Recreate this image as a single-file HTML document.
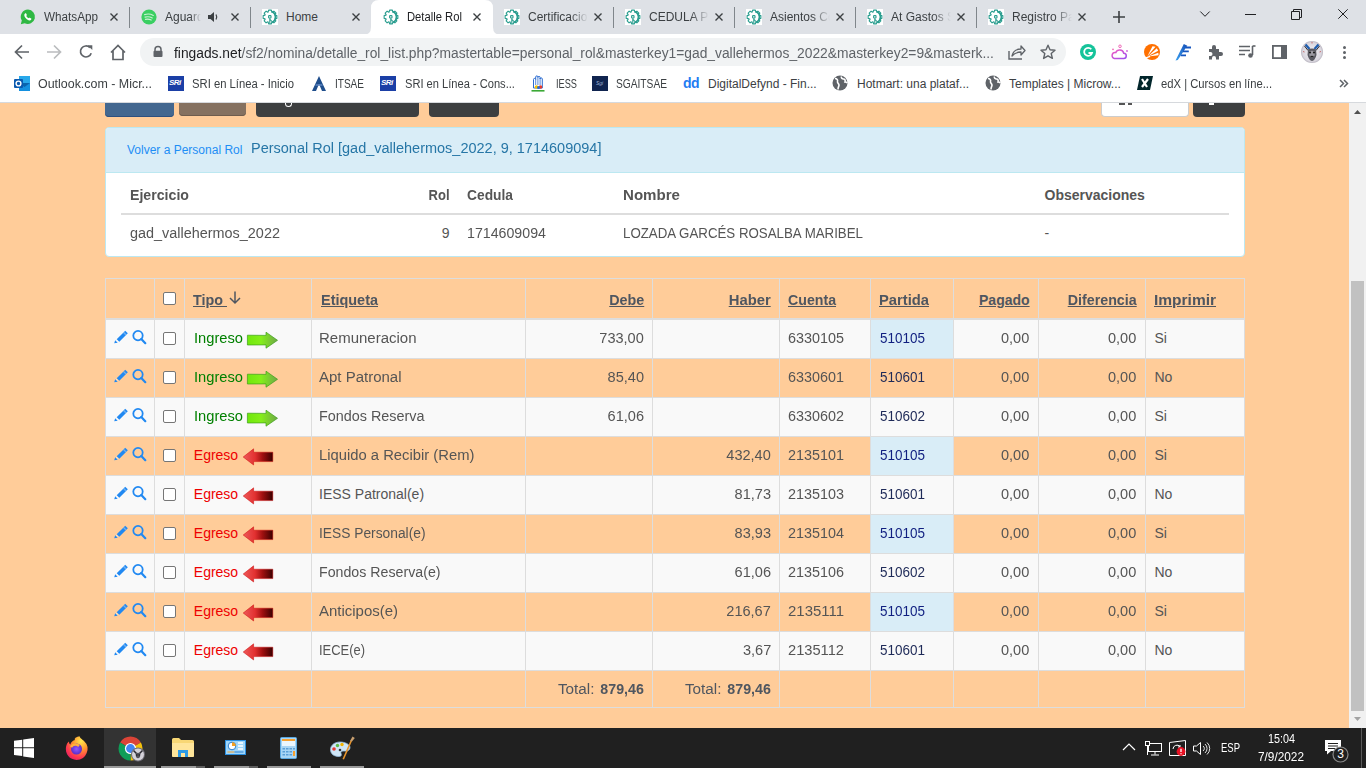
<!DOCTYPE html>
<html><head><meta charset="utf-8"><title>Detalle Rol</title>
<style>
html,body{margin:0;padding:0;width:1366px;height:768px;overflow:hidden;background:#fff;}
body{position:relative;font-family:'Liberation Sans', sans-serif;}
svg{position:absolute;overflow:visible;}
</style></head><body>
<div style="position:absolute;left:0px;top:0px;width:1366px;height:34px;background:#DEE1E6;"></div>
<div style="position:absolute;left:0px;top:34px;width:1366px;height:68px;background:#FFFFFF;"></div>
<div style="position:absolute;left:0px;top:102px;width:1366px;height:1px;background:#D6D9DD;"></div>
<div style="position:absolute;left:0px;top:103px;width:1349px;height:625px;background:#FFCC99;"></div>
<div style="position:absolute;left:1349px;top:103px;width:17px;height:625px;background:#F1F1F1;"></div>
<div style="position:absolute;left:1351px;top:281px;width:13px;height:430px;background:#C1C1C1;"></div>
<div style="position:absolute;left:0px;top:728px;width:1366px;height:40px;background:#202020;"></div>
<svg style="left:363px;top:0px" width="138" height="35" viewBox="0 0 138 35"><path d="M0 35 Q8 35 8 27 L8 8 Q8 0 16 0 L122 0 Q130 0 130 8 L130 27 Q130 35 138 35 Z" fill="#FFFFFF"/></svg>
<svg style="left:20px;top:9px" width="16" height="16" viewBox="0 0 16 16"><path d="M8 0.6a7.2 7.2 0 0 0-6.2 10.9L0.8 15.3l3.9-1A7.2 7.2 0 1 0 8 0.6z" fill="#2FB843"/><path d="M5.3 4.2c.2-.1.5-.1.7.1l.8 1.5c.1.2 0 .4-.1.6l-.5.6c.5 1 1.3 1.8 2.3 2.3l.6-.5c.2-.1.4-.2.6-.1l1.5.8c.2.1.2.4.1.7-.3.8-1 1.3-1.8 1.2C7 11.1 4.6 8.700 4.3 6.300c-.1-.8.3-1.600 1-2.100z" fill="#fff"/></svg>
<div style="position:absolute;left:44px;top:11.0px;font-size:12px;line-height:12px;color:#3C4043;font-weight:normal;white-space:pre;transform:scaleX(0.975);transform-origin:left top;">WhatsApp</div>
<svg style="left:110px;top:13px" width="8" height="8" viewBox="0 0 8 8"><path d="M0.5 0.5L7.5 7.5M7.5 0.5L0.5 7.5" stroke="#3C4043" stroke-width="1.4"/></svg>
<div style="position:absolute;left:129px;top:7px;width:1px;height:21px;background:#80868B;"></div>
<svg style="left:141px;top:9px" width="16" height="16" viewBox="0 0 16 16"><circle cx="8" cy="8" r="7.6" fill="#3ACF62"/><path d="M3.6 5.6C6.200 4.800 9.800 5.000 12.300 6.400M4.000 8.100C6.200 7.500 9.000 7.700 11.300 8.900M4.400 10.400C6.200 10.000 8.400 10.100 10.200 11.100" stroke="#D8F5DF" stroke-opacity="0.9" stroke-width="1.1" fill="none" stroke-linecap="round"/></svg>
<div style="position:absolute;left:165px;top:10px;width:36px;height:16px;overflow:hidden;font-size:12px;line-height:14px;color:#3C4043;white-space:pre;-webkit-mask-image:linear-gradient(90deg,#000 70%,transparent);">Aguard</div>
<svg style="left:231px;top:13px" width="8" height="8" viewBox="0 0 8 8"><path d="M0.5 0.5L7.5 7.5M7.5 0.5L0.5 7.5" stroke="#3C4043" stroke-width="1.4"/></svg>
<div style="position:absolute;left:250px;top:7px;width:1px;height:21px;background:#80868B;"></div>
<svg style="left:262px;top:9px" width="16" height="16" viewBox="0 0 16 16"><rect x="0" y="0" width="16" height="16" fill="#FFFFFF"/><path d="M12.96 6.13 L14.86 6.61 L14.86 9.39 L12.96 9.87 L12.83 10.19 L13.83 11.87 L11.87 13.83 L10.19 12.83 L9.87 12.96 L9.39 14.86 L6.61 14.86 L6.13 12.96 L5.81 12.83 L4.13 13.83 L2.17 11.87 L3.17 10.19 L3.04 9.87 L1.14 9.39 L1.14 6.61 L3.04 6.13 L3.17 5.81 L2.17 4.13 L4.13 2.17 L5.81 3.17 L6.13 3.04 L6.61 1.14 L9.39 1.14 L9.87 3.04 L10.19 3.17 L11.87 2.17 L13.83 4.13 L12.83 5.81Z" fill="none" stroke="#2A9D8F" stroke-width="1.1" stroke-linejoin="round"/><path d="M9.5 2.5A6 6 0 0 1 10 13.5" stroke="#2A9D8F" stroke-width="1.6" fill="none"/><rect x="6.6" y="6.6" width="2.4" height="2.4" rx="0.6" fill="none" stroke="#2A9D8F" stroke-width="1.1"/><path d="M7.8 9.2V14.5M8.3 10.5l1.5 2" stroke="#2A9D8F" stroke-width="1.1" fill="none"/></svg>
<div style="position:absolute;left:286px;top:11.0px;font-size:12px;line-height:12px;color:#3C4043;font-weight:normal;white-space:pre;">Home</div>
<svg style="left:352px;top:13px" width="8" height="8" viewBox="0 0 8 8"><path d="M0.5 0.5L7.5 7.5M7.5 0.5L0.5 7.5" stroke="#3C4043" stroke-width="1.4"/></svg>
<svg style="left:383px;top:9px" width="16" height="16" viewBox="0 0 16 16"><path d="M12.96 6.13 L14.86 6.61 L14.86 9.39 L12.96 9.87 L12.83 10.19 L13.83 11.87 L11.87 13.83 L10.19 12.83 L9.87 12.96 L9.39 14.86 L6.61 14.86 L6.13 12.96 L5.81 12.83 L4.13 13.83 L2.17 11.87 L3.17 10.19 L3.04 9.87 L1.14 9.39 L1.14 6.61 L3.04 6.13 L3.17 5.81 L2.17 4.13 L4.13 2.17 L5.81 3.17 L6.13 3.04 L6.61 1.14 L9.39 1.14 L9.87 3.04 L10.19 3.17 L11.87 2.17 L13.83 4.13 L12.83 5.81Z" fill="none" stroke="#2A9D8F" stroke-width="1.1" stroke-linejoin="round"/><path d="M9.5 2.5A6 6 0 0 1 10 13.5" stroke="#2A9D8F" stroke-width="1.6" fill="none"/><rect x="6.6" y="6.6" width="2.4" height="2.4" rx="0.6" fill="none" stroke="#2A9D8F" stroke-width="1.1"/><path d="M7.8 9.2V14.5M8.3 10.5l1.5 2" stroke="#2A9D8F" stroke-width="1.1" fill="none"/></svg>
<div style="position:absolute;left:407px;top:11.0px;font-size:12px;line-height:12px;color:#202124;font-weight:normal;white-space:pre;transform:scaleX(0.937);transform-origin:left top;">Detalle Rol</div>
<svg style="left:473px;top:13px" width="8" height="8" viewBox="0 0 8 8"><path d="M0.5 0.5L7.5 7.5M7.5 0.5L0.5 7.5" stroke="#3C4043" stroke-width="1.4"/></svg>
<svg style="left:504px;top:9px" width="16" height="16" viewBox="0 0 16 16"><rect x="0" y="0" width="16" height="16" fill="#FFFFFF"/><path d="M12.96 6.13 L14.86 6.61 L14.86 9.39 L12.96 9.87 L12.83 10.19 L13.83 11.87 L11.87 13.83 L10.19 12.83 L9.87 12.96 L9.39 14.86 L6.61 14.86 L6.13 12.96 L5.81 12.83 L4.13 13.83 L2.17 11.87 L3.17 10.19 L3.04 9.87 L1.14 9.39 L1.14 6.61 L3.04 6.13 L3.17 5.81 L2.17 4.13 L4.13 2.17 L5.81 3.17 L6.13 3.04 L6.61 1.14 L9.39 1.14 L9.87 3.04 L10.19 3.17 L11.87 2.17 L13.83 4.13 L12.83 5.81Z" fill="none" stroke="#2A9D8F" stroke-width="1.1" stroke-linejoin="round"/><path d="M9.5 2.5A6 6 0 0 1 10 13.5" stroke="#2A9D8F" stroke-width="1.6" fill="none"/><rect x="6.6" y="6.6" width="2.4" height="2.4" rx="0.6" fill="none" stroke="#2A9D8F" stroke-width="1.1"/><path d="M7.8 9.2V14.5M8.3 10.5l1.5 2" stroke="#2A9D8F" stroke-width="1.1" fill="none"/></svg>
<div style="position:absolute;left:528px;top:10px;width:60px;height:16px;overflow:hidden;font-size:12px;line-height:14px;color:#3C4043;white-space:pre;-webkit-mask-image:linear-gradient(90deg,#000 70%,transparent);">Certificacion</div>
<svg style="left:594px;top:13px" width="8" height="8" viewBox="0 0 8 8"><path d="M0.5 0.5L7.5 7.5M7.5 0.5L0.5 7.5" stroke="#3C4043" stroke-width="1.4"/></svg>
<div style="position:absolute;left:613px;top:7px;width:1px;height:21px;background:#80868B;"></div>
<svg style="left:625px;top:9px" width="16" height="16" viewBox="0 0 16 16"><rect x="0" y="0" width="16" height="16" fill="#FFFFFF"/><path d="M12.96 6.13 L14.86 6.61 L14.86 9.39 L12.96 9.87 L12.83 10.19 L13.83 11.87 L11.87 13.83 L10.19 12.83 L9.87 12.96 L9.39 14.86 L6.61 14.86 L6.13 12.96 L5.81 12.83 L4.13 13.83 L2.17 11.87 L3.17 10.19 L3.04 9.87 L1.14 9.39 L1.14 6.61 L3.04 6.13 L3.17 5.81 L2.17 4.13 L4.13 2.17 L5.81 3.17 L6.13 3.04 L6.61 1.14 L9.39 1.14 L9.87 3.04 L10.19 3.17 L11.87 2.17 L13.83 4.13 L12.83 5.81Z" fill="none" stroke="#2A9D8F" stroke-width="1.1" stroke-linejoin="round"/><path d="M9.5 2.5A6 6 0 0 1 10 13.5" stroke="#2A9D8F" stroke-width="1.6" fill="none"/><rect x="6.6" y="6.6" width="2.4" height="2.4" rx="0.6" fill="none" stroke="#2A9D8F" stroke-width="1.1"/><path d="M7.8 9.2V14.5M8.3 10.5l1.5 2" stroke="#2A9D8F" stroke-width="1.1" fill="none"/></svg>
<div style="position:absolute;left:649px;top:10px;width:60px;height:16px;overflow:hidden;font-size:12px;line-height:14px;color:#3C4043;white-space:pre;-webkit-mask-image:linear-gradient(90deg,#000 70%,transparent);">CEDULA PF</div>
<svg style="left:715px;top:13px" width="8" height="8" viewBox="0 0 8 8"><path d="M0.5 0.5L7.5 7.5M7.5 0.5L0.5 7.5" stroke="#3C4043" stroke-width="1.4"/></svg>
<div style="position:absolute;left:734px;top:7px;width:1px;height:21px;background:#80868B;"></div>
<svg style="left:746px;top:9px" width="16" height="16" viewBox="0 0 16 16"><rect x="0" y="0" width="16" height="16" fill="#FFFFFF"/><path d="M12.96 6.13 L14.86 6.61 L14.86 9.39 L12.96 9.87 L12.83 10.19 L13.83 11.87 L11.87 13.83 L10.19 12.83 L9.87 12.96 L9.39 14.86 L6.61 14.86 L6.13 12.96 L5.81 12.83 L4.13 13.83 L2.17 11.87 L3.17 10.19 L3.04 9.87 L1.14 9.39 L1.14 6.61 L3.04 6.13 L3.17 5.81 L2.17 4.13 L4.13 2.17 L5.81 3.17 L6.13 3.04 L6.61 1.14 L9.39 1.14 L9.87 3.04 L10.19 3.17 L11.87 2.17 L13.83 4.13 L12.83 5.81Z" fill="none" stroke="#2A9D8F" stroke-width="1.1" stroke-linejoin="round"/><path d="M9.5 2.5A6 6 0 0 1 10 13.5" stroke="#2A9D8F" stroke-width="1.6" fill="none"/><rect x="6.6" y="6.6" width="2.4" height="2.4" rx="0.6" fill="none" stroke="#2A9D8F" stroke-width="1.1"/><path d="M7.8 9.2V14.5M8.3 10.5l1.5 2" stroke="#2A9D8F" stroke-width="1.1" fill="none"/></svg>
<div style="position:absolute;left:770px;top:10px;width:60px;height:16px;overflow:hidden;font-size:12px;line-height:14px;color:#3C4043;white-space:pre;-webkit-mask-image:linear-gradient(90deg,#000 70%,transparent);">Asientos Co</div>
<svg style="left:836px;top:13px" width="8" height="8" viewBox="0 0 8 8"><path d="M0.5 0.5L7.5 7.5M7.5 0.5L0.5 7.5" stroke="#3C4043" stroke-width="1.4"/></svg>
<div style="position:absolute;left:855px;top:7px;width:1px;height:21px;background:#80868B;"></div>
<svg style="left:867px;top:9px" width="16" height="16" viewBox="0 0 16 16"><rect x="0" y="0" width="16" height="16" fill="#FFFFFF"/><path d="M12.96 6.13 L14.86 6.61 L14.86 9.39 L12.96 9.87 L12.83 10.19 L13.83 11.87 L11.87 13.83 L10.19 12.83 L9.87 12.96 L9.39 14.86 L6.61 14.86 L6.13 12.96 L5.81 12.83 L4.13 13.83 L2.17 11.87 L3.17 10.19 L3.04 9.87 L1.14 9.39 L1.14 6.61 L3.04 6.13 L3.17 5.81 L2.17 4.13 L4.13 2.17 L5.81 3.17 L6.13 3.04 L6.61 1.14 L9.39 1.14 L9.87 3.04 L10.19 3.17 L11.87 2.17 L13.83 4.13 L12.83 5.81Z" fill="none" stroke="#2A9D8F" stroke-width="1.1" stroke-linejoin="round"/><path d="M9.5 2.5A6 6 0 0 1 10 13.5" stroke="#2A9D8F" stroke-width="1.6" fill="none"/><rect x="6.6" y="6.6" width="2.4" height="2.4" rx="0.6" fill="none" stroke="#2A9D8F" stroke-width="1.1"/><path d="M7.8 9.2V14.5M8.3 10.5l1.5 2" stroke="#2A9D8F" stroke-width="1.1" fill="none"/></svg>
<div style="position:absolute;left:891px;top:10px;width:60px;height:16px;overflow:hidden;font-size:12px;line-height:14px;color:#3C4043;white-space:pre;-webkit-mask-image:linear-gradient(90deg,#000 70%,transparent);">At Gastos Se</div>
<svg style="left:957px;top:13px" width="8" height="8" viewBox="0 0 8 8"><path d="M0.5 0.5L7.5 7.5M7.5 0.5L0.5 7.5" stroke="#3C4043" stroke-width="1.4"/></svg>
<div style="position:absolute;left:976px;top:7px;width:1px;height:21px;background:#80868B;"></div>
<svg style="left:988px;top:9px" width="16" height="16" viewBox="0 0 16 16"><rect x="0" y="0" width="16" height="16" fill="#FFFFFF"/><path d="M12.96 6.13 L14.86 6.61 L14.86 9.39 L12.96 9.87 L12.83 10.19 L13.83 11.87 L11.87 13.83 L10.19 12.83 L9.87 12.96 L9.39 14.86 L6.61 14.86 L6.13 12.96 L5.81 12.83 L4.13 13.83 L2.17 11.87 L3.17 10.19 L3.04 9.87 L1.14 9.39 L1.14 6.61 L3.04 6.13 L3.17 5.81 L2.17 4.13 L4.13 2.17 L5.81 3.17 L6.13 3.04 L6.61 1.14 L9.39 1.14 L9.87 3.04 L10.19 3.17 L11.87 2.17 L13.83 4.13 L12.83 5.81Z" fill="none" stroke="#2A9D8F" stroke-width="1.1" stroke-linejoin="round"/><path d="M9.5 2.5A6 6 0 0 1 10 13.5" stroke="#2A9D8F" stroke-width="1.6" fill="none"/><rect x="6.6" y="6.6" width="2.4" height="2.4" rx="0.6" fill="none" stroke="#2A9D8F" stroke-width="1.1"/><path d="M7.8 9.2V14.5M8.3 10.5l1.5 2" stroke="#2A9D8F" stroke-width="1.1" fill="none"/></svg>
<div style="position:absolute;left:1012px;top:10px;width:60px;height:16px;overflow:hidden;font-size:12px;line-height:14px;color:#3C4043;white-space:pre;-webkit-mask-image:linear-gradient(90deg,#000 70%,transparent);">Registro Pa</div>
<svg style="left:1078px;top:13px" width="8" height="8" viewBox="0 0 8 8"><path d="M0.5 0.5L7.5 7.5M7.5 0.5L0.5 7.5" stroke="#3C4043" stroke-width="1.4"/></svg>
<svg style="left:208px;top:12px" width="11" height="10" viewBox="0 0 11 10"><path d="M0 3h2.5L6 0v10L2.5 7H0z" fill="#3C4043"/><path d="M8 2.5Q9.5 5 8 7.5" stroke="#3C4043" stroke-width="1.2" fill="none"/></svg>
<svg style="left:1113px;top:11px" width="12" height="12" viewBox="0 0 12 12"><path d="M6 0v12M0 6h12" stroke="#3C4043" stroke-width="1.6"/></svg>
<svg style="left:1200px;top:11px" width="10" height="6" viewBox="0 0 10 6"><path d="M0.3 0.5L5 5.3L9.7 0.5" stroke="#202124" stroke-width="1" fill="none"/></svg>
<div style="position:absolute;left:1245px;top:14px;width:11px;height:1px;background:#202124;"></div>
<svg style="left:1291px;top:9px" width="11" height="11" viewBox="0 0 11 11"><path d="M0.5 2.5h8v8h-8z M2.5 2.5V0.5h8v8h-2" stroke="#202124" stroke-width="1" fill="none"/></svg>
<svg style="left:1338px;top:9px" width="10" height="10" viewBox="0 0 10 10"><path d="M0.3 0.3L9.7 9.7M9.7 0.3L0.3 9.7" stroke="#202124" stroke-width="1"/></svg>
<svg style="left:14px;top:44px" width="16" height="16" viewBox="0 0 16 16"><path d="M15 8H2M8 1.5L1.5 8L8 14.5" stroke="#5F6368" stroke-width="1.7" fill="none"/></svg>
<svg style="left:46px;top:44px" width="16" height="16" viewBox="0 0 16 16"><path d="M1 8H14M8 1.5L14.5 8L8 14.5" stroke="#BABCBE" stroke-width="1.7" fill="none"/></svg>
<svg style="left:78px;top:44px" width="16" height="16" viewBox="0 0 16 16"><path d="M13.2 9.200A5.500 5.500 0 1 1 11.900 3.600" stroke="#5F6368" stroke-width="1.7" fill="none"/><path d="M9.500 1.200H14.300V6z" fill="#5F6368"/></svg>
<svg style="left:109px;top:43px" width="18" height="18" viewBox="0 0 18 18"><path d="M2 9.500L9 2.500L16 9.500M4 8v8.500h10V8" stroke="#5F6368" stroke-width="1.7" fill="none"/></svg>
<div style="position:absolute;left:140px;top:38px;width:926px;height:28px;background:#F1F3F4;border-radius:14px;"></div>
<svg style="left:153px;top:46px" width="10" height="11" viewBox="0 0 10 11"><path d="M2 5V3.500a3 3 0 0 1 6 0V5" stroke="#5F6368" stroke-width="1.5" fill="none"/><rect x="0.5" y="4.800" width="9" height="6.200" rx="1" fill="#5F6368"/></svg>
<div style="position:absolute;left:174px;top:45px;font-size:14px;line-height:16px;white-space:pre;color:#5F6368;transform:scaleX(0.986);transform-origin:left top;"><span style="color:#202124">fingads.net</span>/sf2/nomina/detalle_rol_list.php?mastertable=personal_rol&amp;masterkey1=gad_vallehermos_2022&amp;masterkey2=9&amp;masterk...</div>
<svg style="left:1008px;top:44px" width="17" height="16" viewBox="0 0 17 16"><path d="M1 7v8h13" stroke="#5F6368" stroke-width="1.4" fill="none"/><path d="M4 12c1-5 5-7 9-7V2l4 4.500-4 4.500V8c-4 0-7 1.500-9 4z" stroke="#5F6368" stroke-width="1.3" fill="none" stroke-linejoin="round"/></svg>
<svg style="left:1040px;top:44px" width="16" height="16" viewBox="0 0 16 16"><path d="M8 1.200l2 4.600 5 .400-3.800 3.300 1.200 4.900L8 11.800l-4.400 2.600 1.200-4.900L1 6.200l5-.400z" stroke="#5F6368" stroke-width="1.4" fill="none" stroke-linejoin="round"/></svg>
<svg style="left:1080px;top:44px" width="16" height="16" viewBox="0 0 16 16"><circle cx="8" cy="8" r="8" fill="#15C39A"/><path d="M11.300 5.300A4 4 0 1 0 12 9H8.500" stroke="#fff" stroke-width="1.8" fill="none"/></svg>
<svg style="left:1109px;top:43px" width="20" height="18" viewBox="0 0 20 18"><defs><linearGradient id="cl" x1="0" y1="0" x2="1" y2="1"><stop offset="0" stop-color="#F25CC0"/><stop offset="1" stop-color="#9B4DF0"/></linearGradient></defs><path d="M5.500 15.500h9a2.600 2.600 0 0 0 .300-5.200A4.300 4.300 0 0 0 6.700 9.600 3 3 0 0 0 5.500 15.500z" stroke="url(#cl)" stroke-width="1.500" fill="none"/><circle cx="11" cy="3.300" r="1.300" stroke="#F06AB8" stroke-width="1" fill="none"/><circle cx="4" cy="6.300" r="0.900" fill="#F06AB8"/><circle cx="18" cy="8" r="0.900" fill="#D060D8"/></svg>
<svg style="left:1144px;top:44px" width="16" height="16" viewBox="0 0 16 16"><circle cx="8" cy="8" r="8" fill="#FF7000"/><path d="M3.500 12L8.500 2.200L11.500 2.800z M4 12.300L12.800 4.300L14.200 6.800z M4.300 12.600L14.300 8.800L14.600 11.200z" fill="#fff"/><path d="M2 13.800L6 12.300" stroke="#fff" stroke-width="1.300"/></svg>
<svg style="left:1175px;top:43px" width="18" height="18" viewBox="0 0 18 18"><defs><linearGradient id="fe" x1="0" y1="1" x2="1" y2="0"><stop offset="0" stop-color="#3AA0F0"/><stop offset="1" stop-color="#1450B8"/></linearGradient></defs><path d="M0.500 17.500L8.800 1L12.300 2.800L2.800 17z" fill="url(#fe)"/><path d="M10.500 4.500h5.500M8 8.300h5.800M5.800 12.300h5.200" stroke="#1656C0" stroke-width="1.800"/></svg>
<svg style="left:1207px;top:44px" width="17" height="17" viewBox="0 0 17 17"><path d="M2 5h3V3a2 2 0 0 1 4 0v2h3v3h2a2 2 0 0 1 0 4h-2v3.500H9V14a2 2 0 0 0-4 0v1.500H2V12h1.500a2 2 0 0 0 0-4H2z" fill="#5F6368"/></svg>
<svg style="left:1239px;top:45px" width="17" height="14" viewBox="0 0 17 14"><path d="M0 1.500h11M0 5.500h11M0 9.500h6" stroke="#5F6368" stroke-width="1.600"/><path d="M13.500 1v9" stroke="#5F6368" stroke-width="1.600"/><circle cx="11.500" cy="10.500" r="2.300" fill="#5F6368"/><path d="M13.500 1h3" stroke="#5F6368" stroke-width="1.600"/></svg>
<svg style="left:1272px;top:45px" width="15" height="14" viewBox="0 0 15 14"><rect x="0.900" y="0.900" width="13.200" height="12.200" stroke="#5F6368" stroke-width="1.800" fill="none"/><rect x="9" y="1" width="5" height="12" fill="#5F6368"/></svg>
<svg style="left:1301px;top:41px" width="22" height="22" viewBox="0 0 22 22"><defs><radialGradient id="av" cx="0.5" cy="0.5" r="0.5"><stop offset="0" stop-color="#f4f2f6"/><stop offset="0.85" stop-color="#d9d6de"/><stop offset="1" stop-color="#b8b4bf"/></radialGradient></defs><circle cx="11" cy="11" r="11" fill="url(#av)"/><path d="M4.500 3.500L8.500 8M17.500 3.500L13.500 8" stroke="#1F5FB0" stroke-width="2.300"/><path d="M3.500 5L7 9.500M18.500 5L15 9.500" stroke="#2a2a30" stroke-width="1"/><path d="M7 8.500Q11 6.500 15 8.500L15.500 14Q14 19.500 11 20Q8 19.500 6.500 14z" fill="#5A5A62"/><path d="M8 10.500Q11 9 14 10.500L13.500 15Q11 17.500 8.500 15z" fill="#9A98A0"/><circle cx="9" cy="11.500" r="1" fill="#111"/><circle cx="13" cy="11.500" r="1" fill="#111"/><path d="M9.500 15.500h3" stroke="#222" stroke-width="1.300"/><path d="M2 10.500l1.500.5M20 10.500l-1.500.5M11 1v1.500" stroke="#c05050" stroke-width="0.800"/></svg>
<div style="position:absolute;left:1343px;top:46px;width:3px;height:3px;background:#5F6368;border-radius:50%;"></div>
<div style="position:absolute;left:1343px;top:51px;width:3px;height:3px;background:#5F6368;border-radius:50%;"></div>
<div style="position:absolute;left:1343px;top:56px;width:3px;height:3px;background:#5F6368;border-radius:50%;"></div>
<svg style="left:14px;top:75px" width="17" height="17" viewBox="0 0 17 17"><rect x="5" y="1" width="11" height="7" fill="#28A8EA"/><path d="M5 8h11v8H7z" fill="#0A64AD"/><path d="M5 8l5.500 4L16 8v8H5z" fill="#1490DF"/><rect x="0" y="4" width="9" height="9" rx="1" fill="#0A5AB0"/><circle cx="4.500" cy="8.500" r="2.400" stroke="#fff" stroke-width="1.400" fill="none"/></svg>
<div style="position:absolute;left:38px;top:78.0px;font-size:12px;line-height:12px;color:#3C4043;font-weight:normal;white-space:pre;transform:scaleX(1.036);transform-origin:left top;">Outlook.com - Micr...</div>
<div style="position:absolute;left:168px;top:76px;width:16px;height:15px;background:#1B3FA6;"></div><div style="position:absolute;left:169px;top:78px;font:italic bold 8px/10px 'Liberation Sans', sans-serif;color:#fff;letter-spacing:-0.5px">SRi</div>
<div style="position:absolute;left:192px;top:78.0px;font-size:12px;line-height:12px;color:#3C4043;font-weight:normal;white-space:pre;transform:scaleX(0.938);transform-origin:left top;">SRI en Línea - Inicio</div>
<svg style="left:311px;top:75px" width="16" height="17" viewBox="0 0 16 17"><path d="M8 1L1 16h4l3-7 3 7h4z" fill="#1F4E8C"/><path d="M4.500 10h7" stroke="#5C85C0" stroke-width="1.500"/></svg>
<div style="position:absolute;left:335px;top:78.0px;font-size:12px;line-height:12px;color:#3C4043;font-weight:normal;white-space:pre;transform:scaleX(0.836);transform-origin:left top;">ITSAE</div>
<div style="position:absolute;left:380px;top:76px;width:16px;height:15px;background:#1B3FA6;"></div><div style="position:absolute;left:381px;top:78px;font:italic bold 8px/10px 'Liberation Sans', sans-serif;color:#fff;letter-spacing:-0.5px">SRi</div>
<div style="position:absolute;left:405px;top:78.0px;font-size:12px;line-height:12px;color:#3C4043;font-weight:normal;white-space:pre;transform:scaleX(0.926);transform-origin:left top;">SRI en Línea - Cons...</div>
<svg style="left:531px;top:75px" width="14" height="17" viewBox="0 0 14 17"><path d="M2.500 13V4.500a1.100 1.100 0 0 1 2.200 0V2a1.100 1.100 0 0 1 2.200 0v0.500a1.100 1.100 0 0 1 2.200 0V4a1.100 1.100 0 0 1 2.200 0V13z" stroke="#2A6BD0" stroke-width="1" fill="#FFFFFF"/><path d="M4.700 4.500V10M6.900 2.500V10M9.100 3V10" stroke="#2A6BD0" stroke-width="0.800"/><circle cx="5.500" cy="12" r="1.800" fill="#F5C400"/><circle cx="9.500" cy="12" r="1.800" fill="#E63B2E"/><circle cx="7.500" cy="12.500" r="1.500" fill="#2A6BD0"/><rect x="0.500" y="15" width="13" height="1.600" fill="#3BA935"/></svg>
<div style="position:absolute;left:556px;top:78.0px;font-size:12px;line-height:12px;color:#3C4043;font-weight:normal;white-space:pre;transform:scaleX(0.768);transform-origin:left top;">IESS</div>
<div style="position:absolute;left:592px;top:76px;width:16px;height:15px;background:#10244F;"></div>
<div style="position:absolute;left:596px;top:80px;font:italic 5px/6px 'Liberation Sans', sans-serif;color:#9fb3d9">Sgi</div>
<div style="position:absolute;left:616px;top:78.0px;font-size:12px;line-height:12px;color:#3C4043;font-weight:normal;white-space:pre;transform:scaleX(0.850);transform-origin:left top;">SGAITSAE</div>
<div style="position:absolute;left:683px;top:76px;font:bold 14px/14px 'Liberation Sans', sans-serif;color:#1F7CF2;letter-spacing:-0.5px">dd</div>
<div style="position:absolute;left:708px;top:78.0px;font-size:12px;line-height:12px;color:#3C4043;font-weight:normal;white-space:pre;">DigitalDefynd - Fin...</div>
<svg style="left:832px;top:75px" width="16" height="16" viewBox="0 0 16 16"><circle cx="8" cy="8" r="7.500" fill="#5F6368"/><path d="M3 3.500c2 0 3 1.500 2.500 3s1.500 2 1.500 3.500-1 2-1 4.500M9.500 1.500c-.5 1.500.5 2.500 2 2.500s2 1.500 1.500 3c1.500 0 2 .5 2.300 1" stroke="#fff" stroke-width="1.600" fill="none"/></svg>
<div style="position:absolute;left:857px;top:78.0px;font-size:12px;line-height:12px;color:#3C4043;font-weight:normal;white-space:pre;">Hotmart: una plataf...</div>
<svg style="left:985px;top:75px" width="16" height="16" viewBox="0 0 16 16"><circle cx="8" cy="8" r="7.500" fill="#5F6368"/><path d="M3 3.500c2 0 3 1.500 2.500 3s1.500 2 1.500 3.500-1 2-1 4.500M9.500 1.500c-.5 1.500.5 2.500 2 2.500s2 1.500 1.500 3c1.500 0 2 .5 2.300 1" stroke="#fff" stroke-width="1.600" fill="none"/></svg>
<div style="position:absolute;left:1009px;top:78.0px;font-size:12px;line-height:12px;color:#3C4043;font-weight:normal;white-space:pre;">Templates | Microw...</div>
<svg style="left:1137px;top:75px" width="16" height="16" viewBox="0 0 16 16"><path d="M3 1h13l-3 14H0z" fill="#02262B"/><path d="M5 4l5 8M11 4l-6 8" stroke="#fff" stroke-width="2.200"/></svg>
<div style="position:absolute;left:1161px;top:78.0px;font-size:12px;line-height:12px;color:#3C4043;font-weight:normal;white-space:pre;transform:scaleX(0.937);transform-origin:left top;">edX | Cursos en líne...</div>
<svg style="left:1339px;top:79px" width="9" height="9" viewBox="0 0 9 9"><path d="M1 1l3.500 3.500L1 8M5 1l3.500 3.500L5 8" stroke="#5F6368" stroke-width="1.500" fill="none"/></svg>
<div style="position:absolute;left:105px;top:103px;width:69px;height:14px;background:#43678F;border-radius:0 0 4px 4px;border:0;box-shadow:inset 0 -1px 0 #2c5080;"></div>
<div style="position:absolute;left:179px;top:103px;width:67px;height:13px;background:#857160;border-radius:0 0 4px 4px;box-shadow:inset 0 -1px 0 #6e5c4d;"></div>
<div style="position:absolute;left:256px;top:103px;width:163px;height:14px;background:#3D3F40;border-radius:0 0 4px 4px;"></div>
<div style="position:absolute;left:285px;top:103px;width:7px;height:4px;border:1.5px solid #fff;border-top:0;border-radius:0 0 4px 4px;box-sizing:border-box"></div>
<div style="position:absolute;left:429px;top:103px;width:70px;height:14px;background:#3D3F40;border-radius:0 0 4px 4px;"></div>
<div style="position:absolute;left:1101px;top:103px;width:88px;height:14px;background:#FFFFFF;border:1px solid #CCCCCC;border-top:0;border-radius:0 0 4px 4px;box-sizing:border-box;"></div>
<div style="position:absolute;left:1119px;top:103px;width:6px;height:2px;background:#555;"></div>
<div style="position:absolute;left:1128px;top:103px;width:4px;height:2px;background:#555;"></div>
<div style="position:absolute;left:1193px;top:103px;width:52px;height:14px;background:#3D3F40;border-radius:0 0 4px 4px;"></div>
<div style="position:absolute;left:1209px;top:103px;width:5px;height:2px;background:#fff;"></div>
<div style="position:absolute;left:105px;top:127px;width:1140px;height:130px;box-sizing:border-box;border:1px solid #BCE8F1;border-radius:4px;background:#FFFFFF;overflow:hidden"><div style="height:44px;background:#D9EDF7;border-bottom:1px solid #BCE8F1"></div></div>
<div style="position:absolute;left:127px;top:143.5px;font-size:12px;line-height:12px;color:#1E8EF5;font-weight:normal;white-space:pre;">Volver a Personal Rol</div>
<div style="position:absolute;left:250.5px;top:141.0px;font-size:14px;line-height:14px;color:#2676A6;font-weight:normal;white-space:pre;transform:scaleX(1.035);transform-origin:left top;">Personal Rol [gad_vallehermos_2022, 9, 1714609094]</div>
<div style="position:absolute;left:121px;top:213px;width:1108px;height:2px;background:#DDDDDD;"></div>
<div style="position:absolute;left:129.5px;top:188.0px;font-size:14px;line-height:14px;color:#555555;font-weight:bold;white-space:pre;transform:scaleX(1.011);transform-origin:left top;">Ejercicio</div>
<div style="position:absolute;right:916.5px;top:188.0px;font-size:14px;line-height:14px;color:#555555;font-weight:bold;white-space:pre;transform:scaleX(0.931);transform-origin:right top;">Rol</div>
<div style="position:absolute;left:466.5px;top:188.0px;font-size:14px;line-height:14px;color:#555555;font-weight:bold;white-space:pre;transform:scaleX(0.985);transform-origin:left top;">Cedula</div>
<div style="position:absolute;left:623.3px;top:188.0px;font-size:14px;line-height:14px;color:#555555;font-weight:bold;white-space:pre;transform:scaleX(1.077);transform-origin:left top;">Nombre</div>
<div style="position:absolute;left:1044.5px;top:188.0px;font-size:14px;line-height:14px;color:#555555;font-weight:bold;white-space:pre;">Observaciones</div>
<div style="position:absolute;left:129.5px;top:226.0px;font-size:14px;line-height:14px;color:#555555;font-weight:normal;white-space:pre;transform:scaleX(1.030);transform-origin:left top;">gad_vallehermos_2022</div>
<div style="position:absolute;right:916.5px;top:226.0px;font-size:14px;line-height:14px;color:#555555;font-weight:normal;white-space:pre;">9</div>
<div style="position:absolute;left:466.5px;top:226.0px;font-size:14px;line-height:14px;color:#555555;font-weight:normal;white-space:pre;transform:scaleX(1.014);transform-origin:left top;">1714609094</div>
<div style="position:absolute;left:623.3px;top:226.0px;font-size:14px;line-height:14px;color:#555555;font-weight:normal;white-space:pre;transform:scaleX(0.949);transform-origin:left top;">LOZADA GARCÉS ROSALBA MARIBEL</div>
<div style="position:absolute;left:1044.5px;top:226.0px;font-size:14px;line-height:14px;color:#555555;font-weight:normal;white-space:pre;">-</div>
<div style="position:absolute;left:105px;top:320px;width:1140px;height:38px;background:#F9F9F9;"></div>
<div style="position:absolute;left:871px;top:320px;width:82px;height:38px;background:#D9EDF7;"></div>
<div style="position:absolute;left:105px;top:398px;width:1140px;height:38px;background:#F9F9F9;"></div>
<div style="position:absolute;left:871px;top:437px;width:82px;height:38px;background:#D9EDF7;"></div>
<div style="position:absolute;left:105px;top:476px;width:1140px;height:38px;background:#F9F9F9;"></div>
<div style="position:absolute;left:871px;top:515px;width:82px;height:38px;background:#D9EDF7;"></div>
<div style="position:absolute;left:105px;top:554px;width:1140px;height:38px;background:#F9F9F9;"></div>
<div style="position:absolute;left:871px;top:593px;width:82px;height:38px;background:#D9EDF7;"></div>
<div style="position:absolute;left:105px;top:632px;width:1140px;height:38px;background:#F9F9F9;"></div>
<div style="position:absolute;left:105px;top:278px;width:1140px;height:1px;background:#DDDDDD;"></div>
<div style="position:absolute;left:105px;top:318px;width:1140px;height:2px;background:#DDDDDD;"></div>
<div style="position:absolute;left:105px;top:358px;width:1140px;height:1px;background:#DDDDDD;"></div>
<div style="position:absolute;left:105px;top:397px;width:1140px;height:1px;background:#DDDDDD;"></div>
<div style="position:absolute;left:105px;top:436px;width:1140px;height:1px;background:#DDDDDD;"></div>
<div style="position:absolute;left:105px;top:475px;width:1140px;height:1px;background:#DDDDDD;"></div>
<div style="position:absolute;left:105px;top:514px;width:1140px;height:1px;background:#DDDDDD;"></div>
<div style="position:absolute;left:105px;top:553px;width:1140px;height:1px;background:#DDDDDD;"></div>
<div style="position:absolute;left:105px;top:592px;width:1140px;height:1px;background:#DDDDDD;"></div>
<div style="position:absolute;left:105px;top:631px;width:1140px;height:1px;background:#DDDDDD;"></div>
<div style="position:absolute;left:105px;top:670px;width:1140px;height:1px;background:#DDDDDD;"></div>
<div style="position:absolute;left:105px;top:707px;width:1140px;height:1px;background:#DDDDDD;"></div>
<div style="position:absolute;left:105px;top:278px;width:1px;height:430px;background:#DDDDDD;"></div>
<div style="position:absolute;left:154px;top:278px;width:1px;height:430px;background:#DDDDDD;"></div>
<div style="position:absolute;left:184px;top:278px;width:1px;height:430px;background:#DDDDDD;"></div>
<div style="position:absolute;left:311px;top:278px;width:1px;height:430px;background:#DDDDDD;"></div>
<div style="position:absolute;left:525px;top:278px;width:1px;height:430px;background:#DDDDDD;"></div>
<div style="position:absolute;left:652px;top:278px;width:1px;height:430px;background:#DDDDDD;"></div>
<div style="position:absolute;left:779px;top:278px;width:1px;height:430px;background:#DDDDDD;"></div>
<div style="position:absolute;left:870px;top:278px;width:1px;height:430px;background:#DDDDDD;"></div>
<div style="position:absolute;left:953px;top:278px;width:1px;height:430px;background:#DDDDDD;"></div>
<div style="position:absolute;left:1038px;top:278px;width:1px;height:430px;background:#DDDDDD;"></div>
<div style="position:absolute;left:1145px;top:278px;width:1px;height:430px;background:#DDDDDD;"></div>
<div style="position:absolute;left:1244px;top:278px;width:1px;height:430px;background:#DDDDDD;"></div>
<div style="position:absolute;left:163px;top:292px;width:13px;height:13px;box-sizing:border-box;border:1px solid #767676;border-radius:2px;background:#fff"></div>
<div style="position:absolute;left:193px;top:293.0px;font-size:14px;line-height:14px;color:#4F5660;font-weight:bold;white-space:pre;transform:scaleX(1.024);transform-origin:left top;text-decoration:underline;text-underline-offset:1px;">Tipo </div>
<svg style="left:229px;top:291px" width="12" height="13" viewBox="0 0 12 13"><path d="M6 0.500V12M1 7l5 5 5-5" stroke="#4F5660" stroke-width="1.500" fill="none"/></svg>
<div style="position:absolute;left:321px;top:293.0px;font-size:14px;line-height:14px;color:#4F5660;font-weight:bold;white-space:pre;transform:scaleX(1.032);transform-origin:left top;text-decoration:underline;text-underline-offset:1px;">Etiqueta</div>
<div style="position:absolute;right:722px;top:293.0px;font-size:14px;line-height:14px;color:#4F5660;font-weight:bold;white-space:pre;transform:scaleX(1.022);transform-origin:right top;text-decoration:underline;text-underline-offset:1px;">Debe</div>
<div style="position:absolute;right:595px;top:293.0px;font-size:14px;line-height:14px;color:#4F5660;font-weight:bold;white-space:pre;transform:scaleX(1.058);transform-origin:right top;text-decoration:underline;text-underline-offset:1px;">Haber</div>
<div style="position:absolute;left:788px;top:293.0px;font-size:14px;line-height:14px;color:#4F5660;font-weight:bold;white-space:pre;transform:scaleX(1.012);transform-origin:left top;text-decoration:underline;text-underline-offset:1px;">Cuenta</div>
<div style="position:absolute;left:879px;top:293.0px;font-size:14px;line-height:14px;color:#4F5660;font-weight:bold;white-space:pre;transform:scaleX(1.053);transform-origin:left top;text-decoration:underline;text-underline-offset:1px;">Partida</div>
<div style="position:absolute;right:336.4000000000001px;top:293.0px;font-size:14px;line-height:14px;color:#4F5660;font-weight:bold;white-space:pre;text-decoration:underline;text-underline-offset:1px;">Pagado</div>
<div style="position:absolute;right:229.5999999999999px;top:293.0px;font-size:14px;line-height:14px;color:#4F5660;font-weight:bold;white-space:pre;transform:scaleX(1.019);transform-origin:right top;text-decoration:underline;text-underline-offset:1px;">Diferencia</div>
<div style="position:absolute;left:1154.2px;top:293.0px;font-size:14px;line-height:14px;color:#4F5660;font-weight:bold;white-space:pre;transform:scaleX(1.107);transform-origin:left top;text-decoration:underline;text-underline-offset:1px;">Imprimir</div>
<svg style="left:113px;top:328.5px" width="15" height="15" viewBox="0 0 15 15"><path d="M3.700 10.200L11 2.900L13.600 5.500L6.300 12.800z" fill="#2189F2"/><path d="M1.200 14.300L2.200 11.300L4.700 13.800z" fill="#2189F2"/><path d="M3 10.800l1.800 1.800" stroke="#F9F9F9" stroke-width="0.700"/><path d="M10.300 3.600l2.600 2.600" stroke="#F9F9F9" stroke-width="0.600" opacity="0.8"/><path d="M11 2.900l1.200-1.200 2.600 2.600-1.200 1.200z" fill="#2189F2"/></svg>
<svg style="left:132px;top:330px" width="15" height="15" viewBox="0 0 15 15"><circle cx="6" cy="5.600" r="4.700" stroke="#2189F2" stroke-width="1.800" fill="none"/><path d="M9.300 9L13.300 13.200" stroke="#2189F2" stroke-width="2.200" stroke-linecap="round"/></svg>
<div style="position:absolute;left:163px;top:332px;width:13px;height:13px;box-sizing:border-box;border:1px solid #767676;border-radius:2px;background:#fff"></div>
<div style="position:absolute;left:193.5px;top:331.0px;font-size:14px;line-height:14px;color:#008000;font-weight:normal;white-space:pre;transform:scaleX(1.049);transform-origin:left top;">Ingreso</div>
<svg style="left:247px;top:332px" width="31" height="17" viewBox="0 0 31 17"><defs><linearGradient id="ga332" x1="0" y1="0" x2="1" y2="0"><stop offset="0" stop-color="#70E80C"/><stop offset="0.45" stop-color="#84EE1A"/><stop offset="1" stop-color="#6FA848"/></linearGradient></defs><path d="M0.400 3.200L19 3.400V0.200L30.500 8.300L19 16.200V12.900L0.400 13z" fill="url(#ga332)" stroke="#3C9E1A" stroke-width="0.700" stroke-linejoin="miter"/></svg>
<div style="position:absolute;left:319px;top:331.0px;font-size:14px;line-height:14px;color:#555555;font-weight:normal;white-space:pre;transform:scaleX(1.071);transform-origin:left top;">Remuneracion</div>
<div style="position:absolute;right:722px;top:331.0px;font-size:14px;line-height:14px;color:#555555;font-weight:normal;white-space:pre;transform:scaleX(1.040);transform-origin:right top;">733,00</div>
<div style="position:absolute;left:788px;top:331.0px;font-size:14px;line-height:14px;color:#555555;font-weight:normal;white-space:pre;transform:scaleX(1.027);transform-origin:left top;">6330105</div>
<div style="position:absolute;left:879.5px;top:331.0px;font-size:14px;line-height:14px;color:#101F80;font-weight:normal;white-space:pre;transform:scaleX(0.963);transform-origin:left top;">510105</div>
<div style="position:absolute;right:336.4000000000001px;top:331.0px;font-size:14px;line-height:14px;color:#555555;font-weight:normal;white-space:pre;transform:scaleX(1.039);transform-origin:right top;">0,00</div>
<div style="position:absolute;right:229.5999999999999px;top:331.0px;font-size:14px;line-height:14px;color:#555555;font-weight:normal;white-space:pre;transform:scaleX(1.039);transform-origin:right top;">0,00</div>
<div style="position:absolute;left:1154.5px;top:331.0px;font-size:14px;line-height:14px;color:#555555;font-weight:normal;white-space:pre;">Si</div>
<svg style="left:113px;top:367.5px" width="15" height="15" viewBox="0 0 15 15"><path d="M3.700 10.200L11 2.900L13.600 5.500L6.300 12.800z" fill="#2189F2"/><path d="M1.200 14.300L2.200 11.300L4.700 13.800z" fill="#2189F2"/><path d="M3 10.800l1.800 1.800" stroke="#F9F9F9" stroke-width="0.700"/><path d="M10.300 3.600l2.600 2.600" stroke="#F9F9F9" stroke-width="0.600" opacity="0.8"/><path d="M11 2.900l1.200-1.200 2.600 2.600-1.200 1.200z" fill="#2189F2"/></svg>
<svg style="left:132px;top:369px" width="15" height="15" viewBox="0 0 15 15"><circle cx="6" cy="5.600" r="4.700" stroke="#2189F2" stroke-width="1.800" fill="none"/><path d="M9.300 9L13.300 13.200" stroke="#2189F2" stroke-width="2.200" stroke-linecap="round"/></svg>
<div style="position:absolute;left:163px;top:371px;width:13px;height:13px;box-sizing:border-box;border:1px solid #767676;border-radius:2px;background:#fff"></div>
<div style="position:absolute;left:193.5px;top:370.0px;font-size:14px;line-height:14px;color:#008000;font-weight:normal;white-space:pre;transform:scaleX(1.049);transform-origin:left top;">Ingreso</div>
<svg style="left:247px;top:371px" width="31" height="17" viewBox="0 0 31 17"><defs><linearGradient id="ga371" x1="0" y1="0" x2="1" y2="0"><stop offset="0" stop-color="#70E80C"/><stop offset="0.45" stop-color="#84EE1A"/><stop offset="1" stop-color="#6FA848"/></linearGradient></defs><path d="M0.400 3.200L19 3.400V0.200L30.500 8.300L19 16.200V12.900L0.400 13z" fill="url(#ga371)" stroke="#3C9E1A" stroke-width="0.700" stroke-linejoin="miter"/></svg>
<div style="position:absolute;left:319px;top:370.0px;font-size:14px;line-height:14px;color:#555555;font-weight:normal;white-space:pre;transform:scaleX(1.071);transform-origin:left top;">Apt Patronal</div>
<div style="position:absolute;right:722px;top:370.0px;font-size:14px;line-height:14px;color:#555555;font-weight:normal;white-space:pre;transform:scaleX(1.040);transform-origin:right top;">85,40</div>
<div style="position:absolute;left:788px;top:370.0px;font-size:14px;line-height:14px;color:#555555;font-weight:normal;white-space:pre;transform:scaleX(1.027);transform-origin:left top;">6330601</div>
<div style="position:absolute;left:879.5px;top:370.0px;font-size:14px;line-height:14px;color:#1E2A58;font-weight:normal;white-space:pre;transform:scaleX(0.963);transform-origin:left top;">510601</div>
<div style="position:absolute;right:336.4000000000001px;top:370.0px;font-size:14px;line-height:14px;color:#555555;font-weight:normal;white-space:pre;transform:scaleX(1.039);transform-origin:right top;">0,00</div>
<div style="position:absolute;right:229.5999999999999px;top:370.0px;font-size:14px;line-height:14px;color:#555555;font-weight:normal;white-space:pre;transform:scaleX(1.039);transform-origin:right top;">0,00</div>
<div style="position:absolute;left:1154.5px;top:370.0px;font-size:14px;line-height:14px;color:#555555;font-weight:normal;white-space:pre;">No</div>
<svg style="left:113px;top:406.5px" width="15" height="15" viewBox="0 0 15 15"><path d="M3.700 10.200L11 2.900L13.600 5.500L6.300 12.800z" fill="#2189F2"/><path d="M1.200 14.300L2.200 11.300L4.700 13.800z" fill="#2189F2"/><path d="M3 10.800l1.800 1.800" stroke="#F9F9F9" stroke-width="0.700"/><path d="M10.300 3.600l2.600 2.600" stroke="#F9F9F9" stroke-width="0.600" opacity="0.8"/><path d="M11 2.900l1.200-1.200 2.600 2.600-1.200 1.200z" fill="#2189F2"/></svg>
<svg style="left:132px;top:408px" width="15" height="15" viewBox="0 0 15 15"><circle cx="6" cy="5.600" r="4.700" stroke="#2189F2" stroke-width="1.800" fill="none"/><path d="M9.300 9L13.300 13.200" stroke="#2189F2" stroke-width="2.200" stroke-linecap="round"/></svg>
<div style="position:absolute;left:163px;top:410px;width:13px;height:13px;box-sizing:border-box;border:1px solid #767676;border-radius:2px;background:#fff"></div>
<div style="position:absolute;left:193.5px;top:409.0px;font-size:14px;line-height:14px;color:#008000;font-weight:normal;white-space:pre;transform:scaleX(1.049);transform-origin:left top;">Ingreso</div>
<svg style="left:247px;top:410px" width="31" height="17" viewBox="0 0 31 17"><defs><linearGradient id="ga410" x1="0" y1="0" x2="1" y2="0"><stop offset="0" stop-color="#70E80C"/><stop offset="0.45" stop-color="#84EE1A"/><stop offset="1" stop-color="#6FA848"/></linearGradient></defs><path d="M0.400 3.200L19 3.400V0.200L30.500 8.300L19 16.200V12.900L0.400 13z" fill="url(#ga410)" stroke="#3C9E1A" stroke-width="0.700" stroke-linejoin="miter"/></svg>
<div style="position:absolute;left:319px;top:409.0px;font-size:14px;line-height:14px;color:#555555;font-weight:normal;white-space:pre;transform:scaleX(1.027);transform-origin:left top;">Fondos Reserva</div>
<div style="position:absolute;right:722px;top:409.0px;font-size:14px;line-height:14px;color:#555555;font-weight:normal;white-space:pre;transform:scaleX(1.040);transform-origin:right top;">61,06</div>
<div style="position:absolute;left:788px;top:409.0px;font-size:14px;line-height:14px;color:#555555;font-weight:normal;white-space:pre;transform:scaleX(1.027);transform-origin:left top;">6330602</div>
<div style="position:absolute;left:879.5px;top:409.0px;font-size:14px;line-height:14px;color:#1E2A58;font-weight:normal;white-space:pre;transform:scaleX(0.963);transform-origin:left top;">510602</div>
<div style="position:absolute;right:336.4000000000001px;top:409.0px;font-size:14px;line-height:14px;color:#555555;font-weight:normal;white-space:pre;transform:scaleX(1.039);transform-origin:right top;">0,00</div>
<div style="position:absolute;right:229.5999999999999px;top:409.0px;font-size:14px;line-height:14px;color:#555555;font-weight:normal;white-space:pre;transform:scaleX(1.039);transform-origin:right top;">0,00</div>
<div style="position:absolute;left:1154.5px;top:409.0px;font-size:14px;line-height:14px;color:#555555;font-weight:normal;white-space:pre;">Si</div>
<svg style="left:113px;top:445.5px" width="15" height="15" viewBox="0 0 15 15"><path d="M3.700 10.200L11 2.900L13.600 5.500L6.300 12.800z" fill="#2189F2"/><path d="M1.200 14.300L2.200 11.300L4.700 13.800z" fill="#2189F2"/><path d="M3 10.800l1.800 1.800" stroke="#F9F9F9" stroke-width="0.700"/><path d="M10.300 3.600l2.600 2.600" stroke="#F9F9F9" stroke-width="0.600" opacity="0.8"/><path d="M11 2.900l1.200-1.200 2.600 2.600-1.200 1.200z" fill="#2189F2"/></svg>
<svg style="left:132px;top:447px" width="15" height="15" viewBox="0 0 15 15"><circle cx="6" cy="5.600" r="4.700" stroke="#2189F2" stroke-width="1.800" fill="none"/><path d="M9.300 9L13.300 13.200" stroke="#2189F2" stroke-width="2.200" stroke-linecap="round"/></svg>
<div style="position:absolute;left:163px;top:449px;width:13px;height:13px;box-sizing:border-box;border:1px solid #767676;border-radius:2px;background:#fff"></div>
<div style="position:absolute;left:193.8px;top:448.0px;font-size:14px;line-height:14px;color:#EE0000;font-weight:normal;white-space:pre;">Egreso</div>
<svg style="left:243px;top:449px" width="31" height="17" viewBox="0 0 31 17"><defs><linearGradient id="ra449" x1="0" y1="0" x2="1" y2="0"><stop offset="0" stop-color="#EE5A5A"/><stop offset="0.4" stop-color="#E23030"/><stop offset="0.65" stop-color="#A01010"/><stop offset="1" stop-color="#3A0000"/></linearGradient></defs><path d="M29.800 3.200H10.600V-0.200L0.200 8L10.600 16V12.600H29.800z" fill="url(#ra449)" stroke="#C80000" stroke-width="0.600" stroke-opacity="0.8"/></svg>
<div style="position:absolute;left:319px;top:448.0px;font-size:14px;line-height:14px;color:#555555;font-weight:normal;white-space:pre;transform:scaleX(1.057);transform-origin:left top;">Liquido a Recibir (Rem)</div>
<div style="position:absolute;right:595px;top:448.0px;font-size:14px;line-height:14px;color:#555555;font-weight:normal;white-space:pre;transform:scaleX(1.040);transform-origin:right top;">432,40</div>
<div style="position:absolute;left:788px;top:448.0px;font-size:14px;line-height:14px;color:#555555;font-weight:normal;white-space:pre;transform:scaleX(1.027);transform-origin:left top;">2135101</div>
<div style="position:absolute;left:879.5px;top:448.0px;font-size:14px;line-height:14px;color:#101F80;font-weight:normal;white-space:pre;transform:scaleX(0.963);transform-origin:left top;">510105</div>
<div style="position:absolute;right:336.4000000000001px;top:448.0px;font-size:14px;line-height:14px;color:#555555;font-weight:normal;white-space:pre;transform:scaleX(1.039);transform-origin:right top;">0,00</div>
<div style="position:absolute;right:229.5999999999999px;top:448.0px;font-size:14px;line-height:14px;color:#555555;font-weight:normal;white-space:pre;transform:scaleX(1.039);transform-origin:right top;">0,00</div>
<div style="position:absolute;left:1154.5px;top:448.0px;font-size:14px;line-height:14px;color:#555555;font-weight:normal;white-space:pre;">Si</div>
<svg style="left:113px;top:484.5px" width="15" height="15" viewBox="0 0 15 15"><path d="M3.700 10.200L11 2.900L13.600 5.500L6.300 12.800z" fill="#2189F2"/><path d="M1.200 14.300L2.200 11.300L4.700 13.800z" fill="#2189F2"/><path d="M3 10.800l1.800 1.800" stroke="#F9F9F9" stroke-width="0.700"/><path d="M10.300 3.600l2.600 2.600" stroke="#F9F9F9" stroke-width="0.600" opacity="0.8"/><path d="M11 2.900l1.200-1.200 2.600 2.600-1.200 1.200z" fill="#2189F2"/></svg>
<svg style="left:132px;top:486px" width="15" height="15" viewBox="0 0 15 15"><circle cx="6" cy="5.600" r="4.700" stroke="#2189F2" stroke-width="1.800" fill="none"/><path d="M9.300 9L13.300 13.200" stroke="#2189F2" stroke-width="2.200" stroke-linecap="round"/></svg>
<div style="position:absolute;left:163px;top:488px;width:13px;height:13px;box-sizing:border-box;border:1px solid #767676;border-radius:2px;background:#fff"></div>
<div style="position:absolute;left:193.8px;top:487.0px;font-size:14px;line-height:14px;color:#EE0000;font-weight:normal;white-space:pre;">Egreso</div>
<svg style="left:243px;top:488px" width="31" height="17" viewBox="0 0 31 17"><defs><linearGradient id="ra488" x1="0" y1="0" x2="1" y2="0"><stop offset="0" stop-color="#EE5A5A"/><stop offset="0.4" stop-color="#E23030"/><stop offset="0.65" stop-color="#A01010"/><stop offset="1" stop-color="#3A0000"/></linearGradient></defs><path d="M29.800 3.200H10.600V-0.200L0.200 8L10.600 16V12.600H29.800z" fill="url(#ra488)" stroke="#C80000" stroke-width="0.600" stroke-opacity="0.8"/></svg>
<div style="position:absolute;left:319px;top:487.0px;font-size:14px;line-height:14px;color:#555555;font-weight:normal;white-space:pre;">IESS Patronal(e)</div>
<div style="position:absolute;right:595px;top:487.0px;font-size:14px;line-height:14px;color:#555555;font-weight:normal;white-space:pre;transform:scaleX(1.040);transform-origin:right top;">81,73</div>
<div style="position:absolute;left:788px;top:487.0px;font-size:14px;line-height:14px;color:#555555;font-weight:normal;white-space:pre;transform:scaleX(1.027);transform-origin:left top;">2135103</div>
<div style="position:absolute;left:879.5px;top:487.0px;font-size:14px;line-height:14px;color:#1E2A58;font-weight:normal;white-space:pre;transform:scaleX(0.963);transform-origin:left top;">510601</div>
<div style="position:absolute;right:336.4000000000001px;top:487.0px;font-size:14px;line-height:14px;color:#555555;font-weight:normal;white-space:pre;transform:scaleX(1.039);transform-origin:right top;">0,00</div>
<div style="position:absolute;right:229.5999999999999px;top:487.0px;font-size:14px;line-height:14px;color:#555555;font-weight:normal;white-space:pre;transform:scaleX(1.039);transform-origin:right top;">0,00</div>
<div style="position:absolute;left:1154.5px;top:487.0px;font-size:14px;line-height:14px;color:#555555;font-weight:normal;white-space:pre;">No</div>
<svg style="left:113px;top:523.5px" width="15" height="15" viewBox="0 0 15 15"><path d="M3.700 10.200L11 2.900L13.600 5.500L6.300 12.800z" fill="#2189F2"/><path d="M1.200 14.300L2.200 11.300L4.700 13.800z" fill="#2189F2"/><path d="M3 10.800l1.800 1.800" stroke="#F9F9F9" stroke-width="0.700"/><path d="M10.300 3.600l2.600 2.600" stroke="#F9F9F9" stroke-width="0.600" opacity="0.8"/><path d="M11 2.900l1.200-1.200 2.600 2.600-1.200 1.200z" fill="#2189F2"/></svg>
<svg style="left:132px;top:525px" width="15" height="15" viewBox="0 0 15 15"><circle cx="6" cy="5.600" r="4.700" stroke="#2189F2" stroke-width="1.800" fill="none"/><path d="M9.300 9L13.300 13.200" stroke="#2189F2" stroke-width="2.200" stroke-linecap="round"/></svg>
<div style="position:absolute;left:163px;top:527px;width:13px;height:13px;box-sizing:border-box;border:1px solid #767676;border-radius:2px;background:#fff"></div>
<div style="position:absolute;left:193.8px;top:526.0px;font-size:14px;line-height:14px;color:#EE0000;font-weight:normal;white-space:pre;">Egreso</div>
<svg style="left:243px;top:527px" width="31" height="17" viewBox="0 0 31 17"><defs><linearGradient id="ra527" x1="0" y1="0" x2="1" y2="0"><stop offset="0" stop-color="#EE5A5A"/><stop offset="0.4" stop-color="#E23030"/><stop offset="0.65" stop-color="#A01010"/><stop offset="1" stop-color="#3A0000"/></linearGradient></defs><path d="M29.800 3.200H10.600V-0.200L0.200 8L10.600 16V12.600H29.800z" fill="url(#ra527)" stroke="#C80000" stroke-width="0.600" stroke-opacity="0.8"/></svg>
<div style="position:absolute;left:319px;top:526.0px;font-size:14px;line-height:14px;color:#555555;font-weight:normal;white-space:pre;transform:scaleX(0.985);transform-origin:left top;">IESS Personal(e)</div>
<div style="position:absolute;right:595px;top:526.0px;font-size:14px;line-height:14px;color:#555555;font-weight:normal;white-space:pre;transform:scaleX(1.040);transform-origin:right top;">83,93</div>
<div style="position:absolute;left:788px;top:526.0px;font-size:14px;line-height:14px;color:#555555;font-weight:normal;white-space:pre;transform:scaleX(1.027);transform-origin:left top;">2135104</div>
<div style="position:absolute;left:879.5px;top:526.0px;font-size:14px;line-height:14px;color:#101F80;font-weight:normal;white-space:pre;transform:scaleX(0.963);transform-origin:left top;">510105</div>
<div style="position:absolute;right:336.4000000000001px;top:526.0px;font-size:14px;line-height:14px;color:#555555;font-weight:normal;white-space:pre;transform:scaleX(1.039);transform-origin:right top;">0,00</div>
<div style="position:absolute;right:229.5999999999999px;top:526.0px;font-size:14px;line-height:14px;color:#555555;font-weight:normal;white-space:pre;transform:scaleX(1.039);transform-origin:right top;">0,00</div>
<div style="position:absolute;left:1154.5px;top:526.0px;font-size:14px;line-height:14px;color:#555555;font-weight:normal;white-space:pre;">Si</div>
<svg style="left:113px;top:562.5px" width="15" height="15" viewBox="0 0 15 15"><path d="M3.700 10.200L11 2.900L13.600 5.500L6.300 12.800z" fill="#2189F2"/><path d="M1.200 14.300L2.200 11.300L4.700 13.800z" fill="#2189F2"/><path d="M3 10.800l1.800 1.800" stroke="#F9F9F9" stroke-width="0.700"/><path d="M10.300 3.600l2.600 2.600" stroke="#F9F9F9" stroke-width="0.600" opacity="0.8"/><path d="M11 2.900l1.200-1.200 2.600 2.600-1.200 1.200z" fill="#2189F2"/></svg>
<svg style="left:132px;top:564px" width="15" height="15" viewBox="0 0 15 15"><circle cx="6" cy="5.600" r="4.700" stroke="#2189F2" stroke-width="1.800" fill="none"/><path d="M9.300 9L13.300 13.200" stroke="#2189F2" stroke-width="2.200" stroke-linecap="round"/></svg>
<div style="position:absolute;left:163px;top:566px;width:13px;height:13px;box-sizing:border-box;border:1px solid #767676;border-radius:2px;background:#fff"></div>
<div style="position:absolute;left:193.8px;top:565.0px;font-size:14px;line-height:14px;color:#EE0000;font-weight:normal;white-space:pre;">Egreso</div>
<svg style="left:243px;top:566px" width="31" height="17" viewBox="0 0 31 17"><defs><linearGradient id="ra566" x1="0" y1="0" x2="1" y2="0"><stop offset="0" stop-color="#EE5A5A"/><stop offset="0.4" stop-color="#E23030"/><stop offset="0.65" stop-color="#A01010"/><stop offset="1" stop-color="#3A0000"/></linearGradient></defs><path d="M29.800 3.200H10.600V-0.200L0.200 8L10.600 16V12.600H29.800z" fill="url(#ra566)" stroke="#C80000" stroke-width="0.600" stroke-opacity="0.8"/></svg>
<div style="position:absolute;left:319px;top:565.0px;font-size:14px;line-height:14px;color:#555555;font-weight:normal;white-space:pre;transform:scaleX(1.014);transform-origin:left top;">Fondos Reserva(e)</div>
<div style="position:absolute;right:595px;top:565.0px;font-size:14px;line-height:14px;color:#555555;font-weight:normal;white-space:pre;transform:scaleX(1.040);transform-origin:right top;">61,06</div>
<div style="position:absolute;left:788px;top:565.0px;font-size:14px;line-height:14px;color:#555555;font-weight:normal;white-space:pre;transform:scaleX(1.027);transform-origin:left top;">2135106</div>
<div style="position:absolute;left:879.5px;top:565.0px;font-size:14px;line-height:14px;color:#1E2A58;font-weight:normal;white-space:pre;transform:scaleX(0.963);transform-origin:left top;">510602</div>
<div style="position:absolute;right:336.4000000000001px;top:565.0px;font-size:14px;line-height:14px;color:#555555;font-weight:normal;white-space:pre;transform:scaleX(1.039);transform-origin:right top;">0,00</div>
<div style="position:absolute;right:229.5999999999999px;top:565.0px;font-size:14px;line-height:14px;color:#555555;font-weight:normal;white-space:pre;transform:scaleX(1.039);transform-origin:right top;">0,00</div>
<div style="position:absolute;left:1154.5px;top:565.0px;font-size:14px;line-height:14px;color:#555555;font-weight:normal;white-space:pre;">No</div>
<svg style="left:113px;top:601.5px" width="15" height="15" viewBox="0 0 15 15"><path d="M3.700 10.200L11 2.900L13.600 5.500L6.300 12.800z" fill="#2189F2"/><path d="M1.200 14.300L2.200 11.300L4.700 13.800z" fill="#2189F2"/><path d="M3 10.800l1.800 1.800" stroke="#F9F9F9" stroke-width="0.700"/><path d="M10.300 3.600l2.600 2.600" stroke="#F9F9F9" stroke-width="0.600" opacity="0.8"/><path d="M11 2.900l1.200-1.200 2.600 2.600-1.200 1.200z" fill="#2189F2"/></svg>
<svg style="left:132px;top:603px" width="15" height="15" viewBox="0 0 15 15"><circle cx="6" cy="5.600" r="4.700" stroke="#2189F2" stroke-width="1.800" fill="none"/><path d="M9.300 9L13.300 13.200" stroke="#2189F2" stroke-width="2.200" stroke-linecap="round"/></svg>
<div style="position:absolute;left:163px;top:605px;width:13px;height:13px;box-sizing:border-box;border:1px solid #767676;border-radius:2px;background:#fff"></div>
<div style="position:absolute;left:193.8px;top:604.0px;font-size:14px;line-height:14px;color:#EE0000;font-weight:normal;white-space:pre;">Egreso</div>
<svg style="left:243px;top:605px" width="31" height="17" viewBox="0 0 31 17"><defs><linearGradient id="ra605" x1="0" y1="0" x2="1" y2="0"><stop offset="0" stop-color="#EE5A5A"/><stop offset="0.4" stop-color="#E23030"/><stop offset="0.65" stop-color="#A01010"/><stop offset="1" stop-color="#3A0000"/></linearGradient></defs><path d="M29.800 3.200H10.600V-0.200L0.200 8L10.600 16V12.600H29.800z" fill="url(#ra605)" stroke="#C80000" stroke-width="0.600" stroke-opacity="0.8"/></svg>
<div style="position:absolute;left:319px;top:604.0px;font-size:14px;line-height:14px;color:#555555;font-weight:normal;white-space:pre;transform:scaleX(1.069);transform-origin:left top;">Anticipos(e)</div>
<div style="position:absolute;right:595px;top:604.0px;font-size:14px;line-height:14px;color:#555555;font-weight:normal;white-space:pre;transform:scaleX(1.040);transform-origin:right top;">216,67</div>
<div style="position:absolute;left:788px;top:604.0px;font-size:14px;line-height:14px;color:#555555;font-weight:normal;white-space:pre;transform:scaleX(1.068);transform-origin:left top;">2135111</div>
<div style="position:absolute;left:879.5px;top:604.0px;font-size:14px;line-height:14px;color:#101F80;font-weight:normal;white-space:pre;transform:scaleX(0.963);transform-origin:left top;">510105</div>
<div style="position:absolute;right:336.4000000000001px;top:604.0px;font-size:14px;line-height:14px;color:#555555;font-weight:normal;white-space:pre;transform:scaleX(1.039);transform-origin:right top;">0,00</div>
<div style="position:absolute;right:229.5999999999999px;top:604.0px;font-size:14px;line-height:14px;color:#555555;font-weight:normal;white-space:pre;transform:scaleX(1.039);transform-origin:right top;">0,00</div>
<div style="position:absolute;left:1154.5px;top:604.0px;font-size:14px;line-height:14px;color:#555555;font-weight:normal;white-space:pre;">Si</div>
<svg style="left:113px;top:640.5px" width="15" height="15" viewBox="0 0 15 15"><path d="M3.700 10.200L11 2.900L13.600 5.500L6.300 12.800z" fill="#2189F2"/><path d="M1.200 14.300L2.200 11.300L4.700 13.800z" fill="#2189F2"/><path d="M3 10.800l1.800 1.800" stroke="#F9F9F9" stroke-width="0.700"/><path d="M10.300 3.600l2.600 2.600" stroke="#F9F9F9" stroke-width="0.600" opacity="0.8"/><path d="M11 2.900l1.200-1.200 2.600 2.600-1.200 1.200z" fill="#2189F2"/></svg>
<svg style="left:132px;top:642px" width="15" height="15" viewBox="0 0 15 15"><circle cx="6" cy="5.600" r="4.700" stroke="#2189F2" stroke-width="1.800" fill="none"/><path d="M9.300 9L13.300 13.200" stroke="#2189F2" stroke-width="2.200" stroke-linecap="round"/></svg>
<div style="position:absolute;left:163px;top:644px;width:13px;height:13px;box-sizing:border-box;border:1px solid #767676;border-radius:2px;background:#fff"></div>
<div style="position:absolute;left:193.8px;top:643.0px;font-size:14px;line-height:14px;color:#EE0000;font-weight:normal;white-space:pre;">Egreso</div>
<svg style="left:243px;top:644px" width="31" height="17" viewBox="0 0 31 17"><defs><linearGradient id="ra644" x1="0" y1="0" x2="1" y2="0"><stop offset="0" stop-color="#EE5A5A"/><stop offset="0.4" stop-color="#E23030"/><stop offset="0.65" stop-color="#A01010"/><stop offset="1" stop-color="#3A0000"/></linearGradient></defs><path d="M29.800 3.200H10.600V-0.200L0.200 8L10.600 16V12.600H29.800z" fill="url(#ra644)" stroke="#C80000" stroke-width="0.600" stroke-opacity="0.8"/></svg>
<div style="position:absolute;left:319px;top:643.0px;font-size:14px;line-height:14px;color:#555555;font-weight:normal;white-space:pre;transform:scaleX(0.924);transform-origin:left top;">IECE(e)</div>
<div style="position:absolute;right:595px;top:643.0px;font-size:14px;line-height:14px;color:#555555;font-weight:normal;white-space:pre;transform:scaleX(1.040);transform-origin:right top;">3,67</div>
<div style="position:absolute;left:788px;top:643.0px;font-size:14px;line-height:14px;color:#555555;font-weight:normal;white-space:pre;transform:scaleX(1.047);transform-origin:left top;">2135112</div>
<div style="position:absolute;left:879.5px;top:643.0px;font-size:14px;line-height:14px;color:#1E2A58;font-weight:normal;white-space:pre;transform:scaleX(0.963);transform-origin:left top;">510601</div>
<div style="position:absolute;right:336.4000000000001px;top:643.0px;font-size:14px;line-height:14px;color:#555555;font-weight:normal;white-space:pre;transform:scaleX(1.039);transform-origin:right top;">0,00</div>
<div style="position:absolute;right:229.5999999999999px;top:643.0px;font-size:14px;line-height:14px;color:#555555;font-weight:normal;white-space:pre;transform:scaleX(1.039);transform-origin:right top;">0,00</div>
<div style="position:absolute;left:1154.5px;top:643.0px;font-size:14px;line-height:14px;color:#555555;font-weight:normal;white-space:pre;">No</div>
<div style="position:absolute;right:722px;top:682.0px;font-size:14px;line-height:14px;color:#4F5660;font-weight:bold;white-space:pre;transform:scaleX(1.016);transform-origin:right top;">879,46</div>
<div style="position:absolute;right:771.5px;top:682.0px;font-size:14px;line-height:14px;color:#4F5660;font-weight:normal;white-space:pre;transform:scaleX(1.091);transform-origin:right top;">Total:</div>
<div style="position:absolute;right:595px;top:682.0px;font-size:14px;line-height:14px;color:#4F5660;font-weight:bold;white-space:pre;transform:scaleX(1.016);transform-origin:right top;">879,46</div>
<div style="position:absolute;right:644.5px;top:682.0px;font-size:14px;line-height:14px;color:#4F5660;font-weight:normal;white-space:pre;transform:scaleX(1.091);transform-origin:right top;">Total:</div>
<svg style="left:1354px;top:110px" width="7" height="4" viewBox="0 0 7 4"><path d="M0 4L3.500 0L7 4z" fill="#505050"/></svg>
<svg style="left:1354px;top:717px" width="7" height="4" viewBox="0 0 7 4"><path d="M0 0L3.500 4L7 0z" fill="#A3A3A3"/></svg>
<svg style="left:14px;top:738px" width="20" height="20" viewBox="0 0 20 20"><path d="M0 2.800L8.200 1.700V9.300H0zM9.200 1.500L20 0V9.300H9.200zM0 10.300H8.200V18L0 16.900zM9.200 10.300H20V20L9.200 18.500z" fill="#FFFFFF"/></svg>
<svg style="left:64px;top:736px" width="25" height="25" viewBox="0 0 25 25"><defs><radialGradient id="ff1" cx="0.7" cy="0.2" r="1"><stop offset="0" stop-color="#FFE94F"/><stop offset="0.35" stop-color="#FF9A2E"/><stop offset="0.7" stop-color="#FF3750"/><stop offset="1" stop-color="#D4146B"/></radialGradient><radialGradient id="ff2" cx="0.5" cy="0.5" r="0.5"><stop offset="0" stop-color="#9059FF"/><stop offset="1" stop-color="#5B2DC8"/></radialGradient></defs><path d="M12.500 24A11 11 0 0 1 2 11C2.500 8 4 6 5 5.500 5 7 5.500 8 6.300 8.600 7 6 9 4.500 11 4 9.500 2 14 0 16 0.500 15.500 2 18 3 20 5A11 11 0 0 1 12.500 24z" fill="url(#ff1)"/><circle cx="12.500" cy="13" r="5.500" fill="url(#ff2)"/><path d="M7 11c2-3 6-3 8-1" stroke="#FFB03A" stroke-width="2.500" fill="none"/></svg>
<div style="position:absolute;left:104px;top:728px;width:52px;height:40px;background:#333333;"></div>
<div style="position:absolute;left:104px;top:766px;width:52px;height:2px;background:#9A9A9A;"></div>
<svg style="left:118px;top:736px" width="28" height="26" viewBox="0 0 28 26"><path d="M12.5 12.5 L2.11 6.50 A12 12 0 0 1 22.89 6.50Z" fill="#DB4437"/><path d="M12.5 12.5 L22.89 6.50 A12 12 0 0 1 12.50 24.50Z" fill="#F4C20D"/><path d="M12.5 12.5 L12.50 24.50 A12 12 0 0 1 2.11 6.50Z" fill="#0F9D58"/><circle cx="12.5" cy="12.5" r="5.6" fill="#fff"/><circle cx="12.5" cy="12.5" r="4.4" fill="#4285F4"/><circle cx="20" cy="18.5" r="7" fill="#6E6C75"/><circle cx="20" cy="18.5" r="6" fill="#D5D3DA"/><path d="M15.5 14.5l3 3M24.5 14.5l-3 3" stroke="#2a2a30" stroke-width="1.5"/><path d="M17.5 17.5Q20 16 22.5 17.5L22 21Q20 23.5 18 21z" fill="#55545C"/><circle cx="18.8" cy="19" r="0.7" fill="#111"/><circle cx="21.2" cy="19" r="0.7" fill="#111"/></svg>
<svg style="left:172px;top:738px" width="22" height="19" viewBox="0 0 22 19"><path d="M0 1.500A1.500 1.500 0 0 1 1.500 0H7l2 2H20.500A1.500 1.500 0 0 1 22 3.500V17.500A1.500 1.500 0 0 1 20.500 19H1.500A1.500 1.500 0 0 1 0 17.500z" fill="#F8D775"/><path d="M0 5H22V17.500A1.500 1.500 0 0 1 20.500 19H1.500A1.500 1.500 0 0 1 0 17.500z" fill="#FFE59A"/><path d="M6 19V12H16V19H13V15H9V19z" fill="#2D9BE6"/></svg>
<div style="position:absolute;left:161px;top:766px;width:35px;height:2px;background:#9A9A9A;"></div>
<div style="position:absolute;left:196px;top:766px;width:9px;height:2px;background:#5E5E5E;"></div>
<svg style="left:225px;top:740px" width="21" height="15" viewBox="0 0 21 15"><rect x="0" y="0" width="21" height="15" fill="#2B8FE0"/><rect x="1" y="1" width="19" height="13" fill="#9FD6FA"/><circle cx="7" cy="6" r="3.800" fill="#fff" stroke="#2B7FD0" stroke-width="1"/><path d="M7 2.200A3.800 3.800 0 0 1 10.800 6H7z" fill="#F4A020"/><path d="M13 3h5M13 6h5M13 9h5" stroke="#fff" stroke-width="1.300"/><path d="M2.500 12h7" stroke="#F0A030" stroke-width="1"/><path d="M9.500 12h9" stroke="#2B7FD0" stroke-width="1"/></svg>
<div style="position:absolute;left:214px;top:766px;width:35px;height:2px;background:#9A9A9A;"></div>
<div style="position:absolute;left:249px;top:766px;width:9px;height:2px;background:#5E5E5E;"></div>
<svg style="left:280px;top:737px" width="17" height="22" viewBox="0 0 17 22"><rect x="0.500" y="0.500" width="16" height="21" rx="1" fill="#A9D6F5" stroke="#5AA8E0" stroke-width="1"/><rect x="2" y="2" width="13" height="2" fill="#F5A030"/><rect x="2" y="4" width="13" height="5" fill="#EAF6FE"/><g fill="#5A9FD8"><rect x="2.500" y="11" width="2.500" height="1.500"/><rect x="6" y="11" width="2.500" height="1.500"/><rect x="9.500" y="11" width="2.500" height="1.500"/><rect x="13" y="11" width="2" height="1.500"/><rect x="2.500" y="14" width="2.500" height="1.500"/><rect x="6" y="14" width="2.500" height="1.500"/><rect x="9.500" y="14" width="2.500" height="1.500"/><rect x="2.500" y="17" width="2.500" height="1.500"/><rect x="6" y="17" width="2.500" height="1.500"/><rect x="9.500" y="17" width="2.500" height="1.500"/></g><rect x="13" y="14" width="2" height="5" fill="#F5A030"/></svg>
<div style="position:absolute;left:267px;top:766px;width:44px;height:2px;background:#9A9A9A;"></div>
<svg style="left:330px;top:736px" width="25" height="24" viewBox="0 0 25 24"><path d="M10 6C5 6 0.500 9 0.500 13.500S4 20.500 9 20.500c3 0 2.500-2 2-3.200-.5-1.300.5-2.300 2-2.300h3c2.500 0 4-1.500 4-3.500C20 8.500 15.500 6 10 6z" fill="#CFE6F7" stroke="#8FB8D8" stroke-width="0.800"/><circle cx="4" cy="13" r="1.800" fill="#E53935"/><circle cx="7.500" cy="9.500" r="1.700" fill="#5DBB46"/><circle cx="12" cy="8.500" r="1.700" fill="#F4B400"/><circle cx="10" cy="14" r="1.300" fill="#333"/><path d="M12.500 23L20.500 4.500l1.500.6L14 23.500z" fill="#E8952C"/><path d="M20 5L22.500 0.500l2.300 1.500L22 5.500z" fill="#C9A070"/></svg>
<div style="position:absolute;left:320px;top:766px;width:44px;height:2px;background:#9A9A9A;"></div>
<svg style="left:1122px;top:743px" width="14" height="8" viewBox="0 0 14 8"><path d="M1 7L7 1L13 7" stroke="#FFFFFF" stroke-width="1.200" fill="none"/></svg>
<svg style="left:1145px;top:741px" width="17" height="15" viewBox="0 0 17 15"><rect x="3.500" y="2.500" width="13" height="8" stroke="#fff" stroke-width="1" fill="none"/><path d="M10 10.500V13.500M6 14H14" stroke="#fff" stroke-width="1"/><rect x="0.500" y="0.500" width="4" height="4" stroke="#fff" stroke-width="1" fill="#202020"/><path d="M2.500 4.500V14" stroke="#fff" stroke-width="1"/></svg>
<svg style="left:1169px;top:740px" width="18" height="17" viewBox="0 0 18 17"><path d="M0.500 2.500L16.500 0.500V15.500H0.500z" stroke="#fff" stroke-width="1" fill="none"/><path d="M4 9a4 4 0 0 1 7-2.500M11 5v2H9" stroke="#fff" stroke-width="1" fill="none"/><circle cx="12" cy="11.500" r="4.400" fill="#E81123"/><path d="M12 8.800v3.200M12 13.200v1" stroke="#fff" stroke-width="1.300"/></svg>
<svg style="left:1193px;top:741px" width="16" height="15" viewBox="0 0 16 15"><path d="M0.500 5H3.500L7.500 1.500V13.500L3.500 10H0.500z" stroke="#fff" stroke-width="1" fill="none"/><path d="M10 5a3 3 0 0 1 0 5M12 3a6 6 0 0 1 0 9M14 1.500a8 8 0 0 1 0 12" stroke="#fff" stroke-width="1" fill="none" opacity="0.85"/></svg>
<div style="position:absolute;left:1221px;top:742.0px;font-size:12px;line-height:12px;color:#FFFFFF;font-weight:normal;white-space:pre;transform:scaleX(0.791);transform-origin:left top;">ESP</div>
<div style="position:absolute;left:1267.6px;top:733.0px;font-size:12px;line-height:12px;color:#FFFFFF;font-weight:normal;white-space:pre;transform:scaleX(0.899);transform-origin:left top;">15:04</div>
<div style="position:absolute;left:1258px;top:751.0px;font-size:12px;line-height:12px;color:#FFFFFF;font-weight:normal;white-space:pre;transform:scaleX(0.985);transform-origin:left top;">7/9/2022</div>
<svg style="left:1324px;top:739px" width="26" height="24" viewBox="0 0 26 24"><path d="M1 1H17V12H7L3 15.500V12H1z" fill="#fff"/><path d="M4 4.500h10M4 7h10M4 9.500h7" stroke="#202020" stroke-width="1"/><circle cx="16.500" cy="15.500" r="7.500" fill="#202020" stroke="#8A8A8A" stroke-width="1.200"/></svg>
<div style="position:absolute;left:1333px;top:746px;width:15px;text-align:center;font:12px/16px 'Liberation Sans', sans-serif;color:#fff">3</div>
<div style="position:absolute;left:1361px;top:728px;width:1px;height:40px;background:#5A5A5A;"></div>
</body></html>
